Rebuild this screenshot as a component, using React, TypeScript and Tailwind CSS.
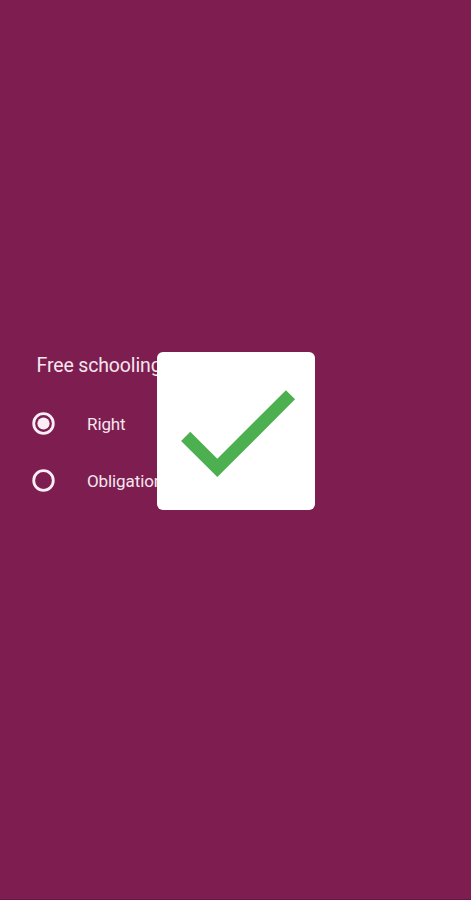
import { useState } from 'react';

const options = [
  { id: 'right', label: 'Right' },
  { id: 'obligation', label: 'Obligation' },
];

function RadioIcon({ checked }: { checked: boolean }) {
  return (
    <svg className="w-[27px] h-[27px] shrink-0" viewBox="0 0 24 24" fill="none">
      <circle cx="12" cy="12" r="8.7" stroke="#fbeef5" strokeWidth="2.5" />
      {checked && <circle cx="12" cy="12" r="5.4" fill="#fbeef5" />}
    </svg>
  );
}

export default function App() {
  const [selected, setSelected] = useState('right');

  return (
    <div className="relative h-[900px] w-full overflow-hidden bg-[#7d1d50] border-b border-[#641740] font-['Roboto',sans-serif] text-[#f6e6ee]">
      {/* Question */}
      <div className="pt-[353px] pl-[30px]">
        <h1 className="pl-[6.5px] text-[19.5px] leading-[26px] tracking-[-0.14px]">Free schooling</h1>
        <div className="mt-[15.5px]">
          {options.map((option) => (
            <button
              key={option.id}
              type="button"
              role="radio"
              aria-checked={selected === option.id}
              onClick={() => setSelected(option.id)}
              className="flex h-[57.5px] items-center gap-[30px] text-[17px] tracking-[-0.1px]"
            >
              <RadioIcon checked={selected === option.id} />
              <span className="pt-[2px]">{option.label}</span>
            </button>
          ))}
        </div>
      </div>

      {/* Result popup */}
      <div className="absolute left-[157px] top-[352.4px] flex size-[158px] items-center justify-center rounded-[6px] bg-white pl-[1.5px] pt-px">
        <svg className="size-[155.5px] shrink-0" viewBox="0 0 24 24" fill="#4caf50">
          <path d="M9 16.17L4.83 12l-1.42 1.41L9 19 21 7l-1.41-1.41z" />
        </svg>
      </div>
    </div>
  );
}
